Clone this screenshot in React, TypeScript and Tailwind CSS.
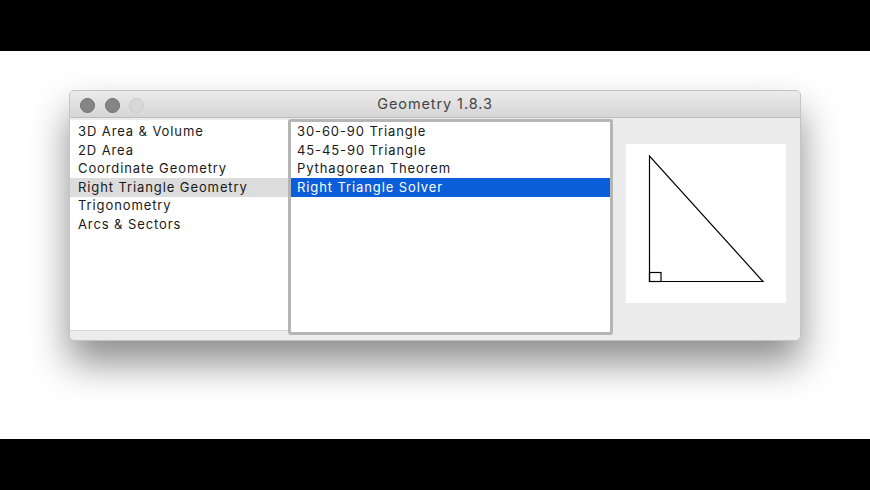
const categories = [
  "3D Area & Volume",
  "2D Area",
  "Coordinate Geometry",
  "Right Triangle Geometry",
  "Trigonometry",
  "Arcs & Sectors",
];

const topics = [
  "30-60-90 Triangle",
  "45-45-90 Triangle",
  "Pythagorean Theorem",
  "Right Triangle Solver",
];

function TrafficLights() {
  return (
    <div className="absolute left-[10px] top-[6.5px] flex gap-[9.5px]">
      <div className="size-[15px] rounded-full bg-[#858585] border border-[#6f6f6f]" />
      <div className="size-[15px] rounded-full bg-[#858585] border border-[#6f6f6f]" />
      <div className="size-[15px] rounded-full bg-[#d8d8d8] border border-[#c9c9c9]" />
    </div>
  );
}

function Triangle() {
  return (
    <svg width="160" height="159" viewBox="0 0 160 159" className="block">
      <g fill="none" stroke="#000" strokeWidth="1.2">
        <path d="M23.5 12 L23.5 137.5 L137 137.5 Z" />
        <rect x="23.5" y="128.5" width="11.5" height="9" />
      </g>
    </svg>
  );
}

export default function App() {
  return (
    <div
      className="w-[870px] h-[490px] flex flex-col bg-white"
      style={{ fontFamily: "Inter, 'Liberation Sans', sans-serif" }}
    >
      <div className="h-[51px] bg-black" />
      <div className="flex-1 pt-[39px] pl-[69px]">
        <div className="w-[732px] h-[251px] rounded-[5px] border border-[#c4c4c4] bg-[#ececec] shadow-[0_22px_38px_rgba(0,0,0,0.45)] overflow-hidden flex flex-col">
          <div className="relative h-[27px] bg-gradient-to-b from-[#ebebeb] to-[#d6d6d6] border-b border-[#bdbdbd] flex items-center justify-center">
            <TrafficLights />
            <span className="text-[14.5px] tracking-[0.9px] text-[#454545]">Geometry 1.8.3</span>
          </div>
          <div className="flex items-start pt-[1px]">
            <div className="w-[218px] h-[211px] mt-[1px] bg-white border-b border-[#d6d6d6] pt-[2.5px]">
              {categories.map((c, i) => (
                <div
                  key={c}
                  className={`h-[18.6px] pl-[8px] flex items-center text-[13px] tracking-[0.9px] text-[#1a1a1a] ${i === 3 ? "bg-[#dcdcdc]" : ""}`}
                >
                  {c}
                </div>
              ))}
            </div>
            <div className="w-[325px] h-[216px] border-[3px] border-[#b5b5b5] rounded-[3px] bg-white pt-[0.5px]">
              {topics.map((t, i) => (
                <div
                  key={t}
                  className={`h-[18.6px] pl-[6px] flex items-center text-[13px] tracking-[0.9px] ${i === 3 ? "bg-[#0a5ed9] text-white" : "text-[#1a1a1a]"}`}
                >
                  {t}
                </div>
              ))}
            </div>
            <div className="ml-[13px] mt-[25px] bg-white">
              <Triangle />
            </div>
          </div>
        </div>
      </div>
      <div className="h-[51px] bg-black" />
    </div>
  );
}
